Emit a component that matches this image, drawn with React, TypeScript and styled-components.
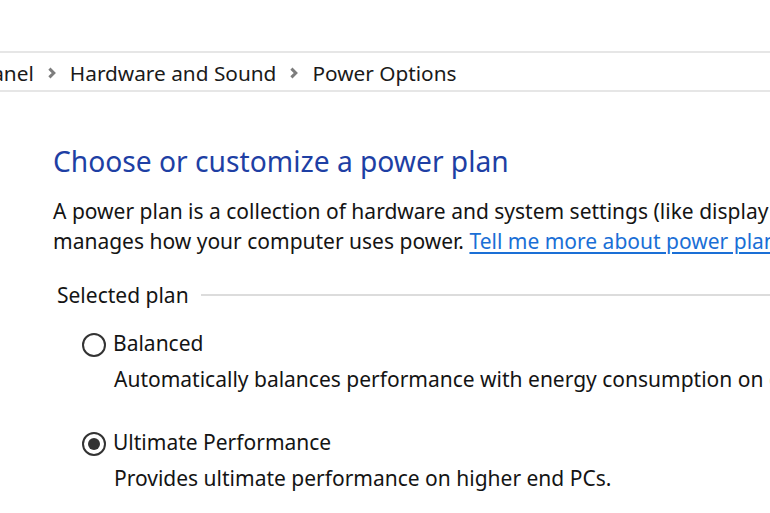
import React from "react";
import styled, { createGlobalStyle } from "styled-components";

const GlobalStyle = createGlobalStyle`
  html, body {
    margin: 0;
    padding: 0;
    background: #ffffff;
    overflow: hidden;
  }
  body {
    font-family: "Noto Sans", "Open Sans", sans-serif;
    color: #111;
  }
`;

const Page = styled.div`
  width: 770px;
  height: 513px;
  overflow: hidden;
  background: #fff;
  padding-top: 51px;
  box-sizing: border-box;
`;

const AddressBar = styled.nav`
  height: 41px;
  padding-top: 2px;
  border-top: 2px solid #e6e6e6;
  border-bottom: 2px solid #e6e6e6;
  display: flex;
  align-items: center;
  box-sizing: border-box;
  overflow: hidden;
`;

const Crumbs = styled.ol`
  display: flex;
  align-items: center;
  list-style: none;
  margin: 0 0 0 -98px;
  padding: 0;
  gap: 13px;
  white-space: nowrap;
`;

const Crumb = styled.li`
  font-size: 20.8px;
  color: #1a1a1a;
  display: flex;
  align-items: center;
  gap: 13px;
`;

const Chevron = () => (
  <svg width="10" height="12" viewBox="0 0 10 12" aria-hidden="true">
    <path d="M2.4 1.6 L6.8 6 L2.4 10.4" fill="none" stroke="#7d7d7d" strokeWidth="3" />
  </svg>
);

const Content = styled.main`
  padding: 50px 0 0 53px;
`;

const Heading = styled.h1`
  margin: 0;
  font-weight: 400;
  font-size: 28.2px;
  line-height: 38px;
  color: #1e3fa4;
  white-space: nowrap;
`;

const Intro = styled.p`
  margin: 16px 0 0;
  font-size: 21px;
  line-height: 30px;
  color: #141414;
  white-space: nowrap;
`;

const Link = styled.a`
  color: #1a6fd6;
  text-decoration: underline;
  text-underline-offset: 3px;
`;

const Group = styled.section`
  margin-top: 24px;
`;

const GroupHeader = styled.div`
  display: flex;
  align-items: center;
  gap: 12px;
  margin-left: 4px;
  font-size: 21px;
  line-height: 30px;
  color: #141414;
  white-space: nowrap;
  &::after {
    content: "";
    flex: 1;
    height: 2px;
    background: #dcdcdc;
    margin-right: -100px;
  }
`;

const PlanList = styled.div`
  display: flex;
  flex-direction: column;
  gap: 33px;
  margin: 18px 0 0 29px;
`;

const Plan = styled.div`
  display: flex;
  flex-direction: column;
`;

const PlanRow = styled.label`
  display: flex;
  align-items: center;
  gap: 7px;
  font-size: 21px;
  line-height: 30px;
  color: #141414;
`;

const Radio = styled.span<{ $checked?: boolean }>`
  width: 24px;
  height: 24px;
  margin-top: 3px;
  box-sizing: border-box;
  border-radius: 50%;
  border: 2px solid #333;
  display: flex;
  align-items: center;
  justify-content: center;
  &::after {
    content: "";
    width: 12px;
    height: 12px;
    border-radius: 50%;
    background: #333;
    display: ${(p) => (p.$checked ? "block" : "none")};
  }
`;

const PlanDesc = styled.div`
  margin: 6px 0 0 32px;
  font-size: 21px;
  line-height: 30px;
  color: #141414;
  white-space: nowrap;
`;

const plans = [
  {
    name: "Balanced",
    desc: "Automatically balances performance with energy consumption on capable hardware.",
    checked: false,
  },
  {
    name: "Ultimate Performance",
    desc: "Provides ultimate performance on higher end PCs.",
    checked: true,
  },
];

export default function App() {
  return (
    <Page>
      <GlobalStyle />
      <AddressBar>
        <Crumbs>
          <Crumb>Control Panel</Crumb>
          <Crumb>
            <Chevron />
            Hardware and Sound
          </Crumb>
          <Crumb>
            <Chevron />
            Power Options
          </Crumb>
        </Crumbs>
      </AddressBar>
      <Content>
        <Heading>Choose or customize a power plan</Heading>
        <Intro>
          A power plan is a collection of hardware and system settings (like display brightness, sleep, etc.) that
          <br />
          manages how your computer uses power. <Link href="#">Tell me more about power plans</Link>
        </Intro>
        <Group>
          <GroupHeader>Selected plan</GroupHeader>
          <PlanList>
            {plans.map((p) => (
              <Plan key={p.name}>
                <PlanRow>
                  <Radio $checked={p.checked} />
                  {p.name}
                </PlanRow>
                <PlanDesc>{p.desc}</PlanDesc>
              </Plan>
            ))}
          </PlanList>
        </Group>
      </Content>
    </Page>
  );
}
